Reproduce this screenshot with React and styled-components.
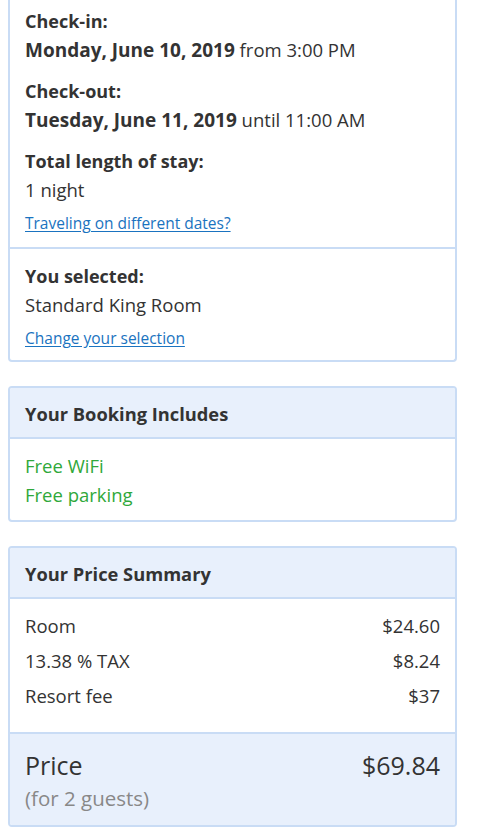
import React from "react";
import styled, { createGlobalStyle } from "styled-components";

const Global = createGlobalStyle`
  html, body { margin: 0; padding: 0; background: #fff; }
  body { font-family: "Open Sans", "Noto Sans", sans-serif; color: #333; }
`;

const Page = styled.div`
  width: 449px;
  padding: 0 0 2px 8px;
  display: flex;
  flex-direction: column;
  gap: 24px;
`;

const Card = styled.section`
  border: 2px solid #c9dcf5;
  border-top: ${(p) => (p.$clipped ? "none" : "2px solid #c9dcf5")};
  border-radius: ${(p) => (p.$clipped ? "0 0 4px 4px" : "4px")};
  background: #fff;
  overflow: hidden;
`;

const Section = styled.div`
  padding: ${(p) => p.$pad || "14px 15px 13px"};
  & + & { border-top: 2px solid #c9dcf5; }
`;

const Header = styled.div`
  background: #e8f0fc;
  border-bottom: 2px solid #c9dcf5;
  padding: 14px 15px 11px;
  font-weight: 700;
  font-size: 18.3px;
  line-height: 24px;
`;

const Group = styled.div`
  margin-bottom: 13px;
`;

const Label = styled.div`
  font-weight: 700;
  font-size: 18px;
  line-height: 28.5px;
`;

const Text = styled.div`
  font-size: 18.5px;
  line-height: 28.5px;
  b { font-weight: 700; font-size: 19px; line-height: 0; }
`;

const Link = styled.a`
  display: block;
  margin-top: 4px;
  color: #1a73c0;
  font-size: 15.5px;
  line-height: 30px;
  text-decoration: underline;
  text-underline-offset: 2px;
  cursor: pointer;
`;

const Feature = styled.div`
  color: #2fa83a;
  font-size: 18.5px;
  line-height: 29px;
`;

const Row = styled.div`
  display: flex;
  justify-content: space-between;
  font-size: 18.5px;
  line-height: 35px;
`;

const Total = styled.div`
  background: #e8f0fc;
  border-top: 2px solid #c9dcf5;
  padding: 14px 15px 10px;
  display: flex;
  justify-content: space-between;
  align-items: flex-start;
`;

const TotalLabel = styled.div`
  font-size: 25px;
  line-height: 34px;
`;

const Sub = styled.div`
  font-size: 20.5px;
  line-height: 33px;
  color: #888;
`;

const TotalValue = styled.div`
  font-size: 25px;
  line-height: 34px;
`;

export default function App() {
  return (
    <>
      <Global />
      <Page>
        <Card $clipped>
          <Section $pad="7px 15px 9px">
            <Group>
              <Label>Check-in:</Label>
              <Text><b>Monday, June 10, 2019</b> from 3:00 PM</Text>
            </Group>
            <Group>
              <Label>Check-out:</Label>
              <Text><b>Tuesday, June 11, 2019</b> until 11:00 AM</Text>
            </Group>
            <Label>Total length of stay:</Label>
            <Text>1 night</Text>
            <Link>Traveling on different dates?</Link>
          </Section>
          <Section $pad="13px 15px 7px">
            <Label>You selected:</Label>
            <Text>Standard King Room</Text>
            <Link>Change your selection</Link>
          </Section>
        </Card>
        <Card>
          <Header>Your Booking Includes</Header>
          <Section $pad="12px 15px 11px">
            <Feature>Free WiFi</Feature>
            <Feature>Free parking</Feature>
          </Section>
        </Card>
        <Card>
          <Header>Your Price Summary</Header>
          <Section $pad="9px 15px 19px">
            <Row><span>Room</span><span>$24.60</span></Row>
            <Row><span>13.38 % TAX</span><span>$8.24</span></Row>
            <Row><span>Resort fee</span><span>$37</span></Row>
          </Section>
          <Total>
            <div>
              <TotalLabel>Price</TotalLabel>
              <Sub>(for 2 guests)</Sub>
            </div>
            <TotalValue>$69.84</TotalValue>
          </Total>
        </Card>
      </Page>
    </>
  );
}
